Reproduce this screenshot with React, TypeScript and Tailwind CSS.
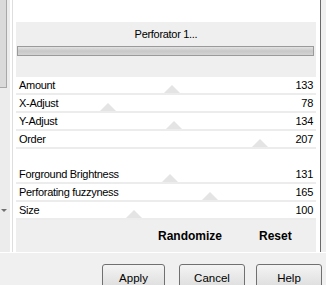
import React from "react";

const group1 = [
  { label: "Amount", value: 133 },
  { label: "X-Adjust", value: 78 },
  { label: "Y-Adjust", value: 134 },
  { label: "Order", value: 207 },
];
const group2 = [
  { label: "Forground Brightness", value: 131 },
  { label: "Perforating fuzzyness", value: 165 },
  { label: "Size", value: 100 },
];

function Row({ label, value }: { label: string; value: number }) {
  const left = (value / 255) * 300 - 8;
  return (
    <div className="relative h-[18px] bg-white border-b-2 border-[#ececec] flex items-center justify-between px-[3px] text-[11px] tracking-[-0.3px] text-black leading-none">
      <svg
        className="absolute bottom-0"
        style={{ left }}
        width="16"
        height="8"
        viewBox="0 0 16 8"
      >
        <polygon points="0,8 8,0 16,8" fill="#e4e4e4" />
      </svg>
      <span className="relative">{label}</span>
      <span className="relative">{value}</span>
    </div>
  );
}

function Btn({ children, w }: { children: React.ReactNode; w: string }) {
  return (
    <div
      className={`${w} h-[26px] rounded-[3px] border border-[#707070] bg-gradient-to-b from-[#f4f4f4] to-[#dcdcdc] flex items-start justify-center pt-[5px] text-[11.5px] text-black`}
    >
      {children}
    </div>
  );
}

export default function App() {
  return (
    <div className="w-[326px] h-[285px] bg-[#f0f0f0] overflow-hidden font-['Liberation_Sans',Arial,sans-serif]">
      <div className="flex h-[253px] border-b border-white">
        <div className="w-[321px] flex bg-white border-r border-[#6a6a6a]">
          {/* scrollbar */}
          <div className="w-[10px] flex flex-col bg-[#ececec]">
            <div className="h-[88px] w-[7px] bg-[#dadada] border-r border-b border-[#a8a8a8]" />
            <div className="flex-1 relative">
              <svg className="absolute left-[1px] top-[121px]" width="6" height="4" viewBox="0 0 6 4">
                <polygon points="0,0 6,0 3,3" fill="#707070" />
              </svg>
            </div>
          </div>
          <div className="w-[6px] flex">
            <div className="w-[2px]" />
            <div className="w-[1px] bg-[#dedede]" />
          </div>
          {/* main */}
          <div className="w-[300px] flex flex-col">
            <div className="h-[22px] bg-white" />
            <div className="h-[55px] bg-[#efefef] flex flex-col">
              <div className="h-[24px] flex items-center justify-center text-[11px] tracking-[-0.3px] text-black">
                Perforator 1...
              </div>
              <div className="ml-[1px] mr-[2px] h-[10px] border border-[#9a9a9a] bg-gradient-to-b from-[#e2e2e2] via-[#c8c8c8] to-[#d4d4d4]" />
            </div>
            {group1.map((r) => (
              <Row key={r.label} {...r} />
            ))}
            <div className="h-[17px] bg-white" />
            {group2.map((r) => (
              <Row key={r.label} {...r} />
            ))}
            <div className="flex-1 bg-[#efefef] flex items-start pt-[7px] text-[12px] font-bold text-black">
              <span className="ml-[142px]">Randomize</span>
              <span className="ml-[37px]">Reset</span>
            </div>
          </div>
        </div>
      </div>
      <div className="flex pt-[11px] pl-[102px] gap-[14px]">
        <Btn w="w-[63px]">Apply</Btn>
        <div className="flex gap-[11px]">
          <Btn w="w-[66px]">Cancel</Btn>
          <Btn w="w-[66px]">Help</Btn>
        </div>
      </div>
    </div>
  );
}
